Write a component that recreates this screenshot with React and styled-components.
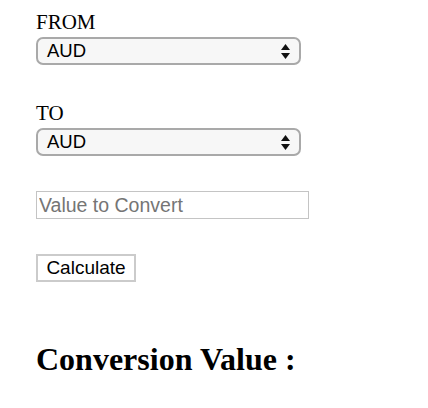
import React from "react";
import styled, { createGlobalStyle } from "styled-components";

const Global = createGlobalStyle`
  html, body { margin: 0; padding: 0; background: #fff; }
  body { font-family: "Liberation Serif", "Times New Roman", serif; color: #000; }
`;

const Page = styled.div`
  padding: 10px 0 0 36px;
  display: flex;
  flex-direction: column;
  align-items: flex-start;
`;

const Label = styled.div`
  font-family: "Liberation Serif", serif;
  font-size: 21px;
  line-height: 24px;
  margin-top: ${(p) => p.$top || 0}px;
`;

const SelectBox = styled.div`
  box-sizing: border-box;
  margin-top: 3px;
  width: 265px;
  height: 28px;
  border: 2px solid #a9a9a9;
  border-radius: 7px;
  background: #f7f7f7;
  display: flex;
  align-items: center;
  justify-content: space-between;
  padding: 0 9px 0 9px;
  font-family: "Liberation Sans", Arial, sans-serif;
  font-size: 18.5px;
  color: #000;
`;

const Arrows = styled.svg`
  width: 9px;
  height: 15px;
  display: block;
`;

const Input = styled.input`
  box-sizing: border-box;
  margin-top: 35px;
  width: 273px;
  height: 28px;
  border: 1px solid #c4c4c4;
  padding: 0 2px;
  font-family: "Liberation Sans", Arial, sans-serif;
  font-size: 19.5px;
  outline: none;
  &::placeholder { color: #757575; }
`;

const Button = styled.button`
  box-sizing: border-box;
  margin-top: 35px;
  width: 100px;
  height: 28px;
  border: 2px solid #cbcbcb;
  background: #fff;
  padding: 0;
  font-family: "Liberation Sans", Arial, sans-serif;
  font-size: 19px;
  color: #000;
`;

const Heading = styled.h2`
  margin: 58px 0 0;
  font-family: "Liberation Serif", serif;
  font-weight: bold;
  font-size: 32px;
  line-height: 38px;
`;

const Select = () => (
  <SelectBox>
    <span>AUD</span>
    <Arrows viewBox="0 0 9 15">
      <path d="M4.5 0 L9 6 L0 6 Z" fill="#111" />
      <path d="M0 9 L9 9 L4.5 15 Z" fill="#111" />
    </Arrows>
  </SelectBox>
);

export default function App() {
  return (
    <>
      <Global />
      <Page>
        <Label>FROM</Label>
        <Select />
        <Label $top={36}>TO</Label>
        <Select />
        <Input placeholder="Value to Convert" />
        <Button>Calculate</Button>
        <Heading>Conversion Value :</Heading>
      </Page>
    </>
  );
}
